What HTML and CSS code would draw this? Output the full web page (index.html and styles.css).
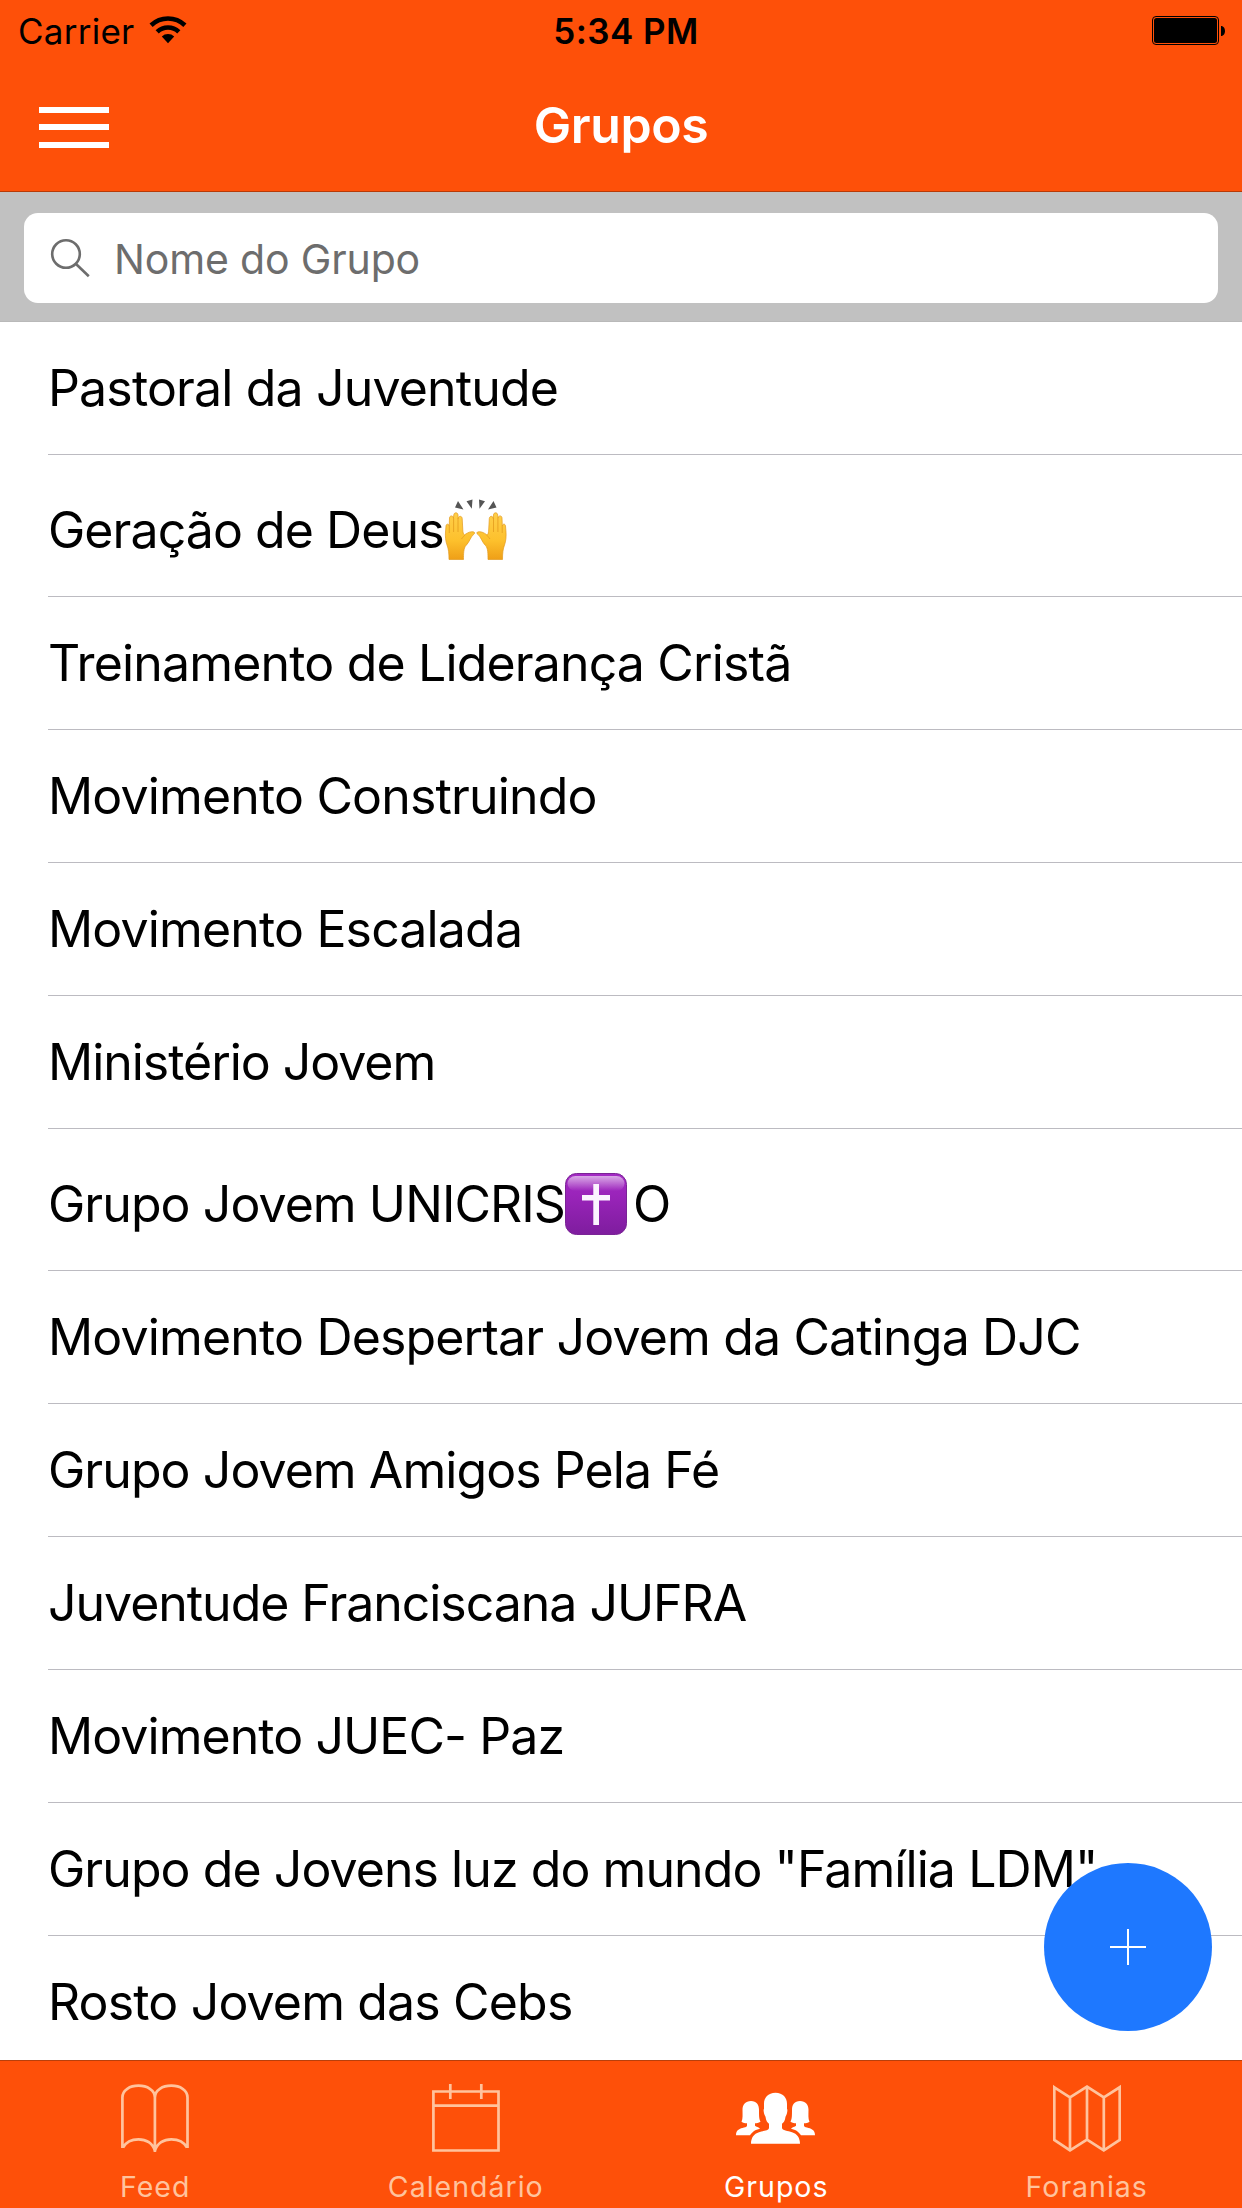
FILE: index.html
```html
<!DOCTYPE html>
<html lang="pt-BR">
<head>
<meta charset="utf-8">
<title>Grupos</title>
<link rel="stylesheet" href="styles.css">
</head>
<body>
<div class="app">
  <header class="top">
    <div class="status">
      <div class="status-left">
        <span class="carrier">Carrier</span>
        <svg class="wifi" width="38" height="28" viewBox="0 0 38 28">
          <g fill="none" stroke="#000" stroke-width="4.6">
            <path d="M2.1 9.2A24.7 24.7 0 0 1 35.9 9.2"/>
            <path d="M8.2 15.8A15.7 15.7 0 0 1 29.8 15.8"/>
          </g>
          <path d="M19 27.2L12.8 20.6A9 9 0 0 1 25.2 20.6Z"/>
        </svg>
      </div>
      <span class="clock">5:34 PM</span>
      <svg class="battery" width="74" height="30" viewBox="0 0 74 30">
        <rect x=".5" y=".5" width="66" height="28" rx="3.5" fill="none" stroke="#000"/>
        <rect x="2" y="2" width="63" height="25" rx="2.5"/>
        <path d="M69 10C74.300 10 74.300 20 69 20Z"/>
      </svg>
    </div>
    <div class="nav">
      <div class="menu"><i></i><i></i><i></i></div>
      <h1 class="title">Grupos</h1>
    </div>
  </header>
  <div class="search">
    <div class="field">
      <svg width="40" height="40" viewBox="0 0 40 40" fill="none" stroke="#6d6d6d" stroke-width="2.600">
        <circle cx="16" cy="16" r="13.800"/><path d="M26 26L38.800 38.300"/>
      </svg>
      <span class="placeholder">Nome do Grupo</span>
    </div>
  </div>
  <ul class="list">
    <li><span>Pastoral da Juventude</span></li>
    <li class="tall snug"><span>Geração de Deus</span><svg class="emoji" width="63" height="62" viewBox="0 0 63 62">
      <defs>
        <linearGradient id="skin" x1="0" y1="0" x2="0" y2="1"><stop offset="0" stop-color="#ffcf4a"/><stop offset=".6" stop-color="#fdc02c"/><stop offset="1" stop-color="#ef9f17"/></linearGradient>
        <g id="hand">
          <path fill="url(#skin)" stroke="#e39a1c" stroke-width=".7" d="M5 60.500C5 54 4.500 50 3 46C1.500 42 1.200 37 1.500 33L2 27C2.200 24.500 4.800 24.500 5.200 27L5.500 19C5.600 16.200 9.200 16.200 9.400 19L9.800 16C10 13 13.800 13 14 16L14.200 19.500C14.500 16.500 18 16.700 18.200 19.500L18.800 31C19 34 19.500 36.500 21 35.500C24 33.500 27 32 30 33C31 33.600 30.700 34.800 29.500 35.500C26.500 38 25.500 43 22 46.500C19.500 49 19.500 55 19.500 60.500Z"/>
          <path fill="none" stroke="#e6a020" stroke-width=".9" d="M5.300 27V34M9.600 19V33M14 19V33M17.500 40C19 38 20 37 21 36"/>
        </g>
      </defs>
      <use href="#hand"/><use href="#hand" transform="translate(63.500 0) scale(-1 1)"/>
      <path fill="#555" d="M14 2L19.500 10.500L11 8.500ZM22.500 2.200L28.500 .500L27.800 9.800ZM35 .500L41 2.200L35.500 9.800ZM49.500 2L52.500 8.500L44 10.500Z"/>
    </svg></li>
    <li><span>Treinamento de Liderança Cristã</span></li>
    <li><span>Movimento Construindo</span></li>
    <li><span>Movimento Escalada</span></li>
    <li class="tight"><span>Ministério Jovem</span></li>
    <li class="tall snug"><span>Grupo Jovem UNICRIS</span><svg class="emoji cross" width="62" height="62" viewBox="0 0 62 62">
      <defs>
        <linearGradient id="tile" x1="0" y1="0" x2="0" y2="1"><stop offset="0" stop-color="#a42ac4"/><stop offset=".35" stop-color="#9a24ba"/><stop offset="1" stop-color="#7e1d9e"/></linearGradient>
        <linearGradient id="gloss" x1="0" y1="0" x2="0" y2="1"><stop offset="0" stop-color="#fff" stop-opacity=".6"/><stop offset="1" stop-color="#fff" stop-opacity="0"/></linearGradient>
      </defs>
      <rect x=".5" y=".5" width="61" height="61" rx="11" fill="url(#tile)" stroke="#7a2496"/>
      <rect x="2.500" y="3" width="57" height="15" rx="8" fill="url(#gloss)"/>
      <path fill="#fbf3ff" d="M28.300 11H34V22H45V27.500H34V52H28.300V27.500H17V22H28.300Z"/>
    </svg><span>O</span></li>
    <li><span>Movimento Despertar Jovem da Catinga DJC</span></li>
    <li class="snug"><span>Grupo Jovem Amigos Pela Fé</span></li>
    <li class="tight"><span>Juventude Franciscana JUFRA</span></li>
    <li class="snug"><span>Movimento JUEC- Paz</span></li>
    <li class="snug"><span>Grupo de Jovens luz do mundo "Família LDM"</span></li>
    <li><span>Rosto Jovem das Cebs</span></li>
  </ul>
  <nav class="tabs">
    <div class="tab">
      <svg width="68" height="68" viewBox="0 0 68 68"><path d="M1.400 64V13.500C1.400 6 9 1.700 17.500 1.700S33.900 6 33.900 13.500V68M66.500 64V13.500C66.500 6 59 1.700 50.300 1.700S33.900 6 33.900 13.500M2 63.500C5 58 11 55.300 17.500 55.300C25 55.300 32 59 33.900 67C36 59 43 55.300 50.300 55.300C57 55.300 63 58 66 63.500"/></svg>
      <span>Feed</span>
    </div>
    <div class="tab">
      <svg width="68" height="68" viewBox="0 0 68 68"><path d="M1.400 7.500H66.500V66.500H1.400ZM1.400 21.600H66.500M18.300 0V15M49.300 0V15"/></svg>
      <span>Calendário</span>
    </div>
    <div class="tab active">
      <svg width="79" height="68" viewBox="0 -8.700 79 68">
        <path d="M39.500 0C47 0 51 5 51 11V16C52 17 51 22 49.500 24C49 28 47.500 30 46 31V35C46 38 52 38 56 39.500C61 41 64 45 64 51H15C15 45 18 41 23 39.500C27 38 33 38 33 35V31C31.500 30 30 28 29.500 24C28 22 27 17 28 16V11C28 5 32 0 39.500 0Z"/>
        <path id="side" d="M15 8.300C20.500 8.300 23 12 23 17C23 23 23 26 24.500 29C22.500 30.500 20.500 30.500 19 30.500V33C20 34.300 23 34.300 24 36C19 37 16.500 39 14 42.500H0C0 37 4 35.800 8 34.800C10 34.200 11 33.800 11 33V30.500C9 30.500 7 30 5.500 29C7 26 6.500 22 6.500 17C6.500 12 9.500 8.300 15 8.300Z"/>
        <use href="#side" transform="translate(79 0) scale(-1 1)"/>
      </svg>
      <span>Grupos</span>
    </div>
    <div class="tab">
      <svg width="68" height="68" viewBox="0 0 68 68"><path d="M1.300 3.300L17 13.500L34 2.500L50.800 13.500L66.700 3.300V56L50.800 66.300L34 55.500L17 66.300L1.300 56ZM17 13.500V66.300M34 2.500V55.500M50.800 13.500V66.300"/></svg>
      <span>Foranias</span>
    </div>
  </nav>
  <div class="fab"><svg width="36" height="36" viewBox="0 0 36 36" stroke="#fff" stroke-width="2"><path d="M18 0V36M0 18H36"/></svg></div>
</div>
</body>
</html>
```
FILE: styles.css
```css
* { box-sizing: border-box; }
body { margin: 0; font-family: Inter, "Liberation Sans", sans-serif; background: #fff; color: #000; }
svg { display: block; flex: none; }
.app { position: relative; width: 1242px; height: 2208px; display: flex; flex-direction: column; overflow: hidden; }

.top { flex: none; height: 192px; background: #fe5009; border-bottom: 1px solid #b83a07; }
.status { height: 60px; display: grid; grid-template-columns: 1fr auto 1fr; line-height: 62px; font-size: 35px; }
.status-left { display: flex; padding-left: 18px; }
.carrier { letter-spacing: .25px; }
.wifi { margin: 16px 0 0 15px; }
.clock { font-weight: 600; letter-spacing: .45px; padding-left: 10px; }
.battery { justify-self: end; margin: 16px 16px 0 0; }
.nav { height: 131px; display: grid; grid-template-columns: 1fr auto 1fr; }
.menu { width: 70px; margin: 47px 0 0 39px; display: flex; flex-direction: column; gap: 11.3px; }
.menu i { height: 6px; background: #fff; }
.title { margin: 0; color: #fff; font-size: 50px; font-weight: 600; line-height: 130px; letter-spacing: -.4px; }

.search { flex: none; height: 130px; padding: 21px 24px 19px; background: #c1c1c1; border-bottom: 1px solid #b9b9b9; }
.field { height: 90px; padding-left: 26px; border-radius: 14px; background: #fff; display: flex; align-items: center; }
.placeholder { margin-left: 24px; padding-top: 1px; color: #6d6d6d; font-size: 41px; letter-spacing: -.15px; }

.list { flex: 1; min-height: 0; overflow: hidden; margin: 0; padding: 0 0 0 48px; list-style: none; font-size: 50px; letter-spacing: -.84px; }
.list li { height: 133px; display: flex; align-items: center; border-bottom: 1px solid #bcbbc1; white-space: pre; }
.list li.tall { height: 142px; padding-top: 9px; }
.list .snug { letter-spacing: -.93px; }
.list .tight { letter-spacing: -1.03px; }
.emoji { margin-top: -1px; }
.cross { margin-right: 6px; }

.tabs { flex: none; height: 148px; display: flex; background: #fe5009; border-top: 1px solid #b83f0b; }
.tab { flex: 1; padding-top: 23px; display: flex; flex-direction: column; align-items: center; color: #ffc39d; font-size: 28.5px; line-height: 36px; letter-spacing: 1px; }
.tab span { margin-top: 17px; }
.tab svg { fill: none; stroke: #ffc39d; stroke-width: 2.7; }
.tab.active { color: #fff; }
.tab.active svg { margin-right: 1px; fill: #fff; stroke: none; }

.fab { position: absolute; left: 1044px; top: 1863px; width: 168px; height: 168px; border-radius: 50%; background: #1e78ff; display: flex; align-items: center; justify-content: center; }
```
